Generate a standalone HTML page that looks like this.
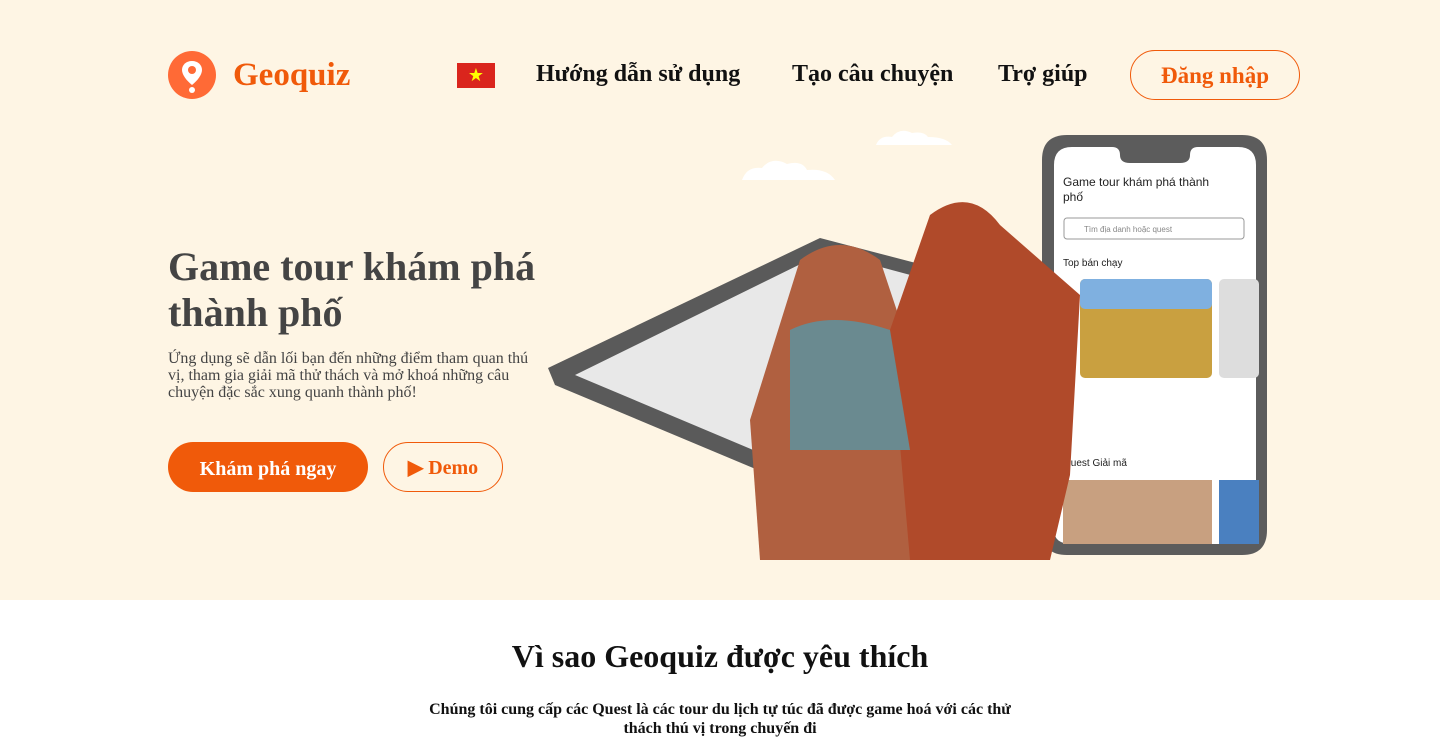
<!DOCTYPE html>
<html><head><meta charset="utf-8"><style>
*{margin:0;padding:0;box-sizing:border-box}
body{width:1440px;height:739px;overflow:hidden;background:#fff;font-family:"Liberation Serif",serif}
.hero{position:absolute;left:0;top:0;width:1440px;height:600px;background:#fef5e4}
.logo{position:absolute;left:168px;top:51px;width:48px;height:48px;border-radius:50%;background:#ff6a36}
.brand{position:absolute;left:233px;top:57px;font-size:33px;font-weight:bold;color:#f05a0a}
.flag{position:absolute;left:457px;top:63px;width:38px;height:25px;background:#da251d;color:#ff0;font-size:18px;line-height:25px;text-align:center}
.nav{position:absolute;top:61px;font-size:24px;font-weight:bold;color:#111}
.login{position:absolute;left:1130px;top:50px;width:170px;height:50px;border:1px solid #f05a0a;border-radius:25px;color:#f05a0a;font-size:23px;font-weight:bold;text-align:center;line-height:50px}
h1{position:absolute;left:168px;top:244px;font-size:40px;line-height:46px;color:#444;font-weight:bold;width:400px}
.p{position:absolute;left:168px;top:350px;width:370px;font-size:16px;line-height:17px;color:#444}
.b1{position:absolute;left:168px;top:442px;width:200px;height:50px;border-radius:25px;background:#f05a0a;color:#fff;font-size:20px;font-weight:bold;text-align:center;line-height:54px}
.b2{position:absolute;left:383px;top:442px;width:120px;height:50px;border-radius:25px;border:1px solid #f05a0a;color:#f05a0a;font-size:20px;font-weight:bold;text-align:center;line-height:50px}
h2{position:absolute;left:0;width:1440px;top:638px;text-align:center;font-size:32px;color:#111}
.sub{position:absolute;left:420px;width:600px;top:700px;text-align:center;font-size:16px;font-weight:bold;line-height:19px;color:#111}
</style></head><body>
<div class="hero">
<div class="logo"><svg width="48" height="48" viewBox="0 0 48 48"><path d="M24 10c-6 0-10 4-10 9 0 5 5 11 10 15 5-4 10-10 10-15 0-5-4-9-10-9z" fill="#fff"/><circle cx="24" cy="19" r="4" fill="#ff6a36"/><circle cx="24" cy="39" r="3" fill="#fff"/></svg></div>
<div class="brand">Geoquiz</div>
<div class="flag">★</div>
<div class="nav" style="left:536px">Hướng dẫn sử dụng</div>
<div class="nav" style="left:792px">Tạo câu chuyện</div>
<div class="nav" style="left:998px">Trợ giúp</div>
<div class="login">Đăng nhập</div>
<h1>Game tour khám phá thành phố</h1>
<div class="p">Ứng dụng sẽ dẫn lối bạn đến những điểm tham quan thú vị, tham gia giải mã thử thách và mở khoá những câu chuyện đặc sắc xung quanh thành phố!</div>
<div class="b1">Khám phá ngay</div>
<div class="b2">▶ Demo</div>
<svg style="position:absolute;left:0;top:0" width="1440" height="600">
<path d="M742 180q5-14 20-12q10-12 25-4q15-4 20 6q20-2 28 10z" fill="#fff"/>
<path d="M876 145q4-10 16-8q8-10 20-4q12-2 16 4q18 0 24 8z" fill="#fff"/>
<path d="M820 238L1000 285 990 475 770 475 555 385 548 368z" fill="#5a5a5a"/>
<path d="M825 252L985 295 975 440 765 455 575 375z" fill="#e8e8e8"/>
<path d="M1042 160q0-25 25-25h175q25 0 25 25v370q0 25-25 25h-175q-25 0-25-25z" fill="#5c5c5c"/>
<path d="M1054 165q0-18 18-18h40q8 0 8 8q0 8 10 8h50q10 0 10-8q0-8 8-8h40q18 0 18 18v365q0 14-14 14h-170q-18 0-18-14z" fill="#fff"/>
<text x="1063" y="186" font-family="Liberation Sans" font-size="12" fill="#222">Game tour khám phá thành</text>
<text x="1063" y="201" font-family="Liberation Sans" font-size="12" fill="#222">phố</text>
<rect x="1064" y="218" width="180" height="21" rx="3" fill="#fff" stroke="#999"/>
<text x="1084" y="232" font-family="Liberation Sans" font-size="8" fill="#888">Tìm địa danh hoặc quest</text>
<text x="1063" y="266" font-family="Liberation Sans" font-size="10" fill="#222">Top bán chạy</text>
<rect x="1080" y="279" width="132" height="99" rx="5" fill="#c9a040"/><rect x="1080" y="279" width="132" height="30" rx="5" fill="#7fb0e0"/>
<rect x="1219" y="279" width="40" height="99" rx="5" fill="#ddd"/>
<text x="1063" y="466" font-family="Liberation Sans" font-size="10" fill="#222">Quest Giải mã</text>
<rect x="1063" y="480" width="149" height="64" fill="#c8a080"/><rect x="1219" y="480" width="40" height="64" fill="#4a80c0"/>
<path d="M800 260q40-30 80 0l40 120 -10 180 -150 0 -10-140z" fill="#b06040"/>
<path d="M930 215q40-30 70 10l80 70 -10 180 -20 85 -140 0 -20-230z" fill="#b04a2a"/>
<path d="M790 330q40-20 100 0l20 120 -120 0z" fill="#6a8a90"/>
</svg>
</div>
<h2>Vì sao Geoquiz được yêu thích</h2>
<div class="sub">Chúng tôi cung cấp các Quest là các tour du lịch tự túc đã được game hoá với các thử thách thú vị trong chuyến đi</div>
</body></html>
